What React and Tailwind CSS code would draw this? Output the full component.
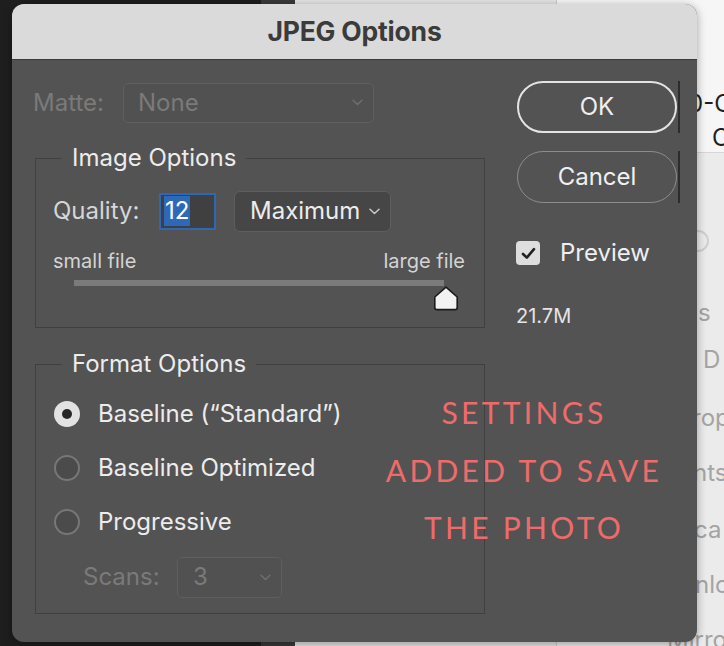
import React from "react";

function Chevron({ color = "#c8c8c8" }) {
  return (
    <svg width="11" height="7" viewBox="0 0 11 7" fill="none">
      <path d="M1 1.2 L5.5 5.5 L10 1.2" stroke={color} strokeWidth="1.5" strokeLinecap="round" strokeLinejoin="round" />
    </svg>
  );
}

function Radio({ checked }) {
  if (checked) {
    return (
      <div className="w-[26px] h-[26px] rounded-full bg-[#e2e2e2] flex items-center justify-center shrink-0">
        <div className="w-[10px] h-[10px] rounded-full bg-[#262626]" />
      </div>
    );
  }
  return <div className="w-[26px] h-[26px] rounded-full border-2 border-[#777777] bg-[#4b4b4b] shrink-0" />;
}

export default function App() {
  return (
    <div
      className="relative w-[724px] h-[646px] overflow-hidden"
      style={{ fontFamily: "Inter, 'Noto Sans', 'Liberation Sans', sans-serif" }}
    >
      {/* desktop background */}
      <div className="flex h-full">
        <div className="w-[261px] shrink-0 bg-[#1e1e1e]" />
        <div className="w-[34px] shrink-0 bg-[#393939]" />
        <div className="w-[262px] shrink-0 bg-[#e4e4e4] border-r border-[#c9c9c9]" />
        <div className="flex-1 min-w-0 overflow-hidden flex flex-col bg-[#ebebeb] text-[24px]">
          <div className="h-[153px] shrink-0 bg-[#f6f6f6] border-b border-[#d6d6d6] flex flex-col text-[#1f1f1f]">
            <div className="mt-[90px] pl-[131px] leading-[28px] whitespace-nowrap">0-C</div>
            <div className="mt-[6px] pl-[155px] leading-[28px] whitespace-nowrap">C</div>
          </div>
          <div className="flex flex-col text-[#a4a4a4] leading-[26px] whitespace-nowrap">
            <div className="mt-[77px] ml-[130px] w-[22px] h-[22px] rounded-full border-2 border-[#cfcfcf]" />
            <div className="mt-[48px] pl-[141px]">s</div>
            <div className="mt-[21px] pl-[146px]">D</div>
            <div className="mt-[32px] pl-[135px]">rop</div>
            <div className="mt-[29px] pl-[136px]">nts</div>
            <div className="mt-[31px] pl-[137px]">ca</div>
            <div className="mt-[29px] pl-[138px]">nlo</div>
            <div className="mt-[29px] pl-[110px]">Mirror</div>
          </div>
        </div>
      </div>

      {/* dialog window */}
      <div className="absolute left-[12px] top-[4px] w-[685px] h-[638px] rounded-[12px] overflow-hidden flex flex-col bg-[#535353] shadow-[0_2px_10px_rgba(0,0,0,0.35)]">
        <div className="h-[56px] shrink-0 bg-[#d9dad9] border-b border-[#3a3a3a] flex items-center justify-center">
          <span className="text-[26.5px] font-bold text-[#3b3b3b] tracking-[-0.2px]">JPEG Options</span>
        </div>

        <div className="flex pl-[21px] pt-[23px]">
          {/* left column */}
          <div className="w-[452px] flex flex-col">
            {/* Matte */}
            <div className="flex items-center h-[39px]">
              <span className="w-[90px] text-[24px] text-[#7a7a7a]">Matte:</span>
              <div className="w-[251px] h-[40px] border border-[#5f5f5f] rounded-[5px] bg-[#515151] flex items-center justify-between pl-[14px] pr-[10px]">
                <span className="text-[24px] text-[#7a7a7a]">None</span>
                <Chevron color="#6e6e6e" />
              </div>
            </div>

            {/* Image Options */}
            <div className="mt-[36px] ml-[2px] w-[450px] h-[170px] border border-[#404040] flex flex-col">
              <div className="-mt-[14px] ml-[26px] w-fit px-[10px] bg-[#535353] text-[24px] leading-[26px] text-[#ececec]">
                Image Options
              </div>
              <div className="mt-[20px] pl-[17px] flex items-center h-[40px]">
                <span className="w-[106px] text-[24px] text-[#d6d6d6]">Quality:</span>
                <div className="w-[57px] h-[37px] border-2 border-[#2f67b4] bg-[#404040] flex items-center pl-[3px]">
                  <span className="bg-[#2d69b8] text-white text-[24px] leading-[30px] px-[1px]">12</span>
                </div>
                <div className="ml-[18px] w-[157px] h-[41px] border border-[#5e5e5e] rounded-[6px] bg-[#464646] flex items-center justify-between pl-[15px] pr-[10px]">
                  <span className="text-[24px] text-[#ececec]">Maximum</span>
                  <Chevron />
                </div>
              </div>
              <div className="mt-[19px] pl-[17px] pr-[19px] flex justify-between text-[20px] leading-[22px] text-[#d4d4d4]">
                <span>small file</span>
                <span>large file</span>
              </div>
              <div className="relative mt-[8px] ml-[38px] w-[370px] h-[30px]">
                <div className="h-[6px] bg-[#7b7b7b]" />
                <svg className="absolute left-[359px] top-[6px]" width="26" height="25" viewBox="0 0 26 25" fill="none">
                  <path
                    d="M13 1.2 L24.2 11 L24.2 21.5 Q24.2 23.6 22.2 23.6 L3.8 23.6 Q1.8 23.6 1.8 21.5 L1.8 11 Z"
                    fill="#f2f2f2"
                    stroke="#1b1b1b"
                    strokeWidth="1.6"
                    strokeLinejoin="round"
                  />
                </svg>
              </div>
            </div>

            {/* Format Options */}
            <div className="mt-[36px] ml-[2px] w-[450px] h-[250px] border border-[#404040] flex flex-col">
              <div className="-mt-[14px] ml-[26px] w-fit px-[10px] bg-[#535353] text-[24px] leading-[26px] text-[#ececec]">
                Format Options
              </div>
              <div className="mt-[22px] pl-[18px] flex flex-col gap-[24px] text-[24px] text-[#ececec]">
                <div className="flex items-center h-[30px] gap-[18px]">
                  <Radio checked />
                  <span>Baseline (“Standard”)</span>
                </div>
                <div className="flex items-center h-[30px] gap-[18px]">
                  <Radio />
                  <span>Baseline Optimized</span>
                </div>
                <div className="flex items-center h-[30px] gap-[18px]">
                  <Radio />
                  <span>Progressive</span>
                </div>
              </div>
              <div className="mt-[20px] pl-[47px] flex items-center h-[40px]">
                <span className="w-[94px] text-[24px] text-[#7a7a7a]">Scans:</span>
                <div className="w-[105px] h-[41px] border border-[#5f5f5f] rounded-[5px] bg-[#515151] flex items-center justify-between pl-[15px] pr-[10px]">
                  <span className="text-[24px] text-[#7a7a7a]">3</span>
                  <Chevron color="#6e6e6e" />
                </div>
              </div>
            </div>
          </div>

          {/* right column */}
          <div className="ml-[31px] -mt-[2px] flex flex-col">
            <div className="flex items-stretch">
              <div className="ml-[1px] w-[160px] h-[52px] rounded-full border-2 border-[#e4e4e4] flex items-center justify-center text-[24px] text-[#efefef]">
                OK
              </div>
              <div className="ml-[1px] w-[2px] bg-[#2c2c2c]" />
            </div>
            <div className="mt-[18px] flex items-stretch">
              <div className="ml-[1px] w-[160px] h-[52px] rounded-full border-[1.5px] border-[#8c8c8c] flex items-center justify-center text-[24px] text-[#efefef]">
                Cancel
              </div>
              <div className="ml-[1px] w-[2px] bg-[#2c2c2c]" />
            </div>
            <div className="mt-[38px] flex items-center h-[24px]">
              <div className="w-[24px] h-[24px] rounded-[4px] bg-[#dedede] flex items-center justify-center">
                <svg width="15" height="13" viewBox="0 0 15 13" fill="none">
                  <path d="M2 7 L5.8 10.6 L13 2.2" stroke="#222222" strokeWidth="2.6" strokeLinecap="round" strokeLinejoin="round" />
                </svg>
              </div>
              <span className="ml-[20px] text-[24px] text-[#efefef]">Preview</span>
            </div>
            <div className="mt-[40px] text-[20px] leading-[22px] text-[#e4e4e4]">21.7M</div>
          </div>
        </div>

        {/* annotation overlay */}
        <div
          className="absolute left-[355px] top-[380px] w-[314px] text-center text-[30px] leading-[57.5px] tracking-[3.3px] text-[#ef6b6b] whitespace-nowrap"
          style={{ fontFamily: "Lato, 'Open Sans', sans-serif" }}
        >
          <div>SETTINGS</div>
          <div>ADDED TO SAVE</div>
          <div>THE PHOTO</div>
        </div>
      </div>
    </div>
  );
}
